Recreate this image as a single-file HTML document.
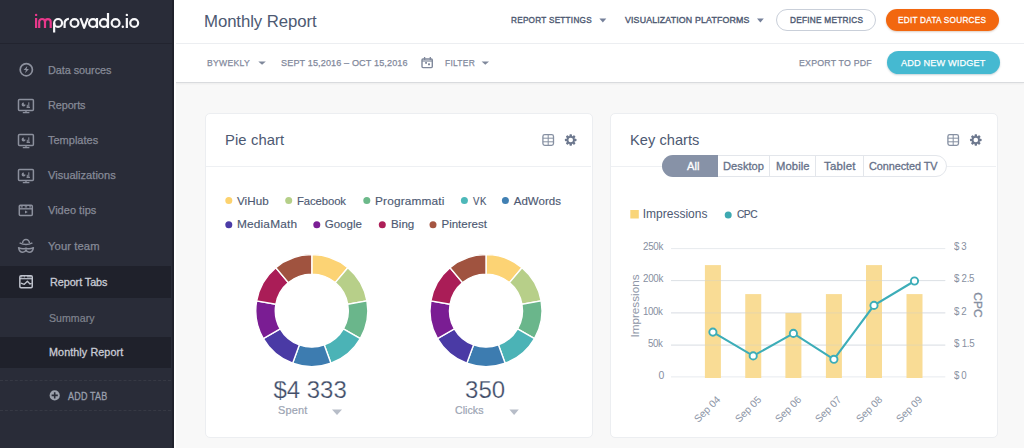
<!DOCTYPE html>
<html><head><meta charset="utf-8"><style>
html,body{margin:0;padding:0;}
body{width:1024px;height:448px;overflow:hidden;position:relative;background:#f8f8f8;font-family:"Liberation Sans",sans-serif;}
.a{position:absolute;}
.t{position:absolute;transform-origin:0 0;white-space:nowrap;line-height:20px;font-family:"Liberation Sans",sans-serif;}
svg{position:absolute;left:0;top:0;}

</style></head><body>
<div class="a" style="left:0;top:0;width:174px;height:448px;background:#292c38"></div>
<div class="a" style="left:172px;top:0;width:2px;height:448px;background:#20222c"></div>
<div class="a" style="left:0;top:43px;width:172px;height:1px;background:#22242f"></div>
<div class="a" style="left:0;top:266px;width:171px;height:32px;background:#1f212b"></div>
<div class="a" style="left:0;top:337px;width:171px;height:31px;background:#1f212b"></div>
<div class="a" style="left:0;top:380px;width:171px;height:0;border-top:1px dashed #363944"></div>
<div class="a" style="left:0;top:410px;width:171px;height:0;border-top:1px dashed #363944"></div>
<div class="a" style="left:174px;top:0;width:850px;height:82px;background:#fff;box-shadow:0 2px 2px rgba(0,0,0,0.05)"></div>
<div class="a" style="left:176px;top:43px;width:848px;height:1px;background:#eceef1"></div>
<div class="a" style="left:174px;top:82px;width:850px;height:1px;background:#d9dbde"></div>
<div class="a" style="left:174px;top:0;width:2px;height:448px;background:#fff"></div>
<div class="a" style="left:776px;top:9px;width:98px;height:20px;border:1.5px solid #c9cfd9;border-radius:12px;background:#fff"></div>
<div class="a" style="left:886px;top:9px;width:113px;height:22px;border-radius:11px;background:#f2670f;box-shadow:0 1px 2px rgba(120,60,20,0.25)"></div>
<div class="a" style="left:887px;top:51px;width:113px;height:23px;border-radius:11.5px;background:#45b9d1;box-shadow:0 1px 2px rgba(20,80,100,0.25)"></div>
<div class="a" style="left:205px;top:113px;width:386px;height:323px;background:#fff;border:1px solid #eceef1;border-radius:5px"></div>
<div class="a" style="left:610px;top:113px;width:386px;height:323px;background:#fff;border:1px solid #eceef1;border-radius:5px"></div>
<div class="a" style="left:206px;top:166px;width:385px;height:1px;background:#eef0f3"></div>
<div class="a" style="left:611px;top:166px;width:385px;height:1px;background:#eef0f3"></div>
<div class="a" style="left:662px;top:155px;width:283px;height:20px;border:1px solid #e3e6eb;border-radius:11px;background:#fff"></div>
<div class="a" style="left:662px;top:155px;width:56px;height:22px;border-radius:11px 0 0 11px;background:#8792a7"></div>
<div class="a" style="left:769px;top:156px;width:1px;height:20px;background:#e3e6eb"></div>
<div class="a" style="left:815px;top:156px;width:1px;height:20px;background:#e3e6eb"></div>
<div class="a" style="left:863px;top:156px;width:1px;height:20px;background:#e3e6eb"></div>
<svg width="1024" height="448" viewBox="0 0 1024 448"><circle cx="26.3" cy="69.7" r="6.1" fill="none" stroke="#8c909d" stroke-width="1.7"/><path d="M27.3 65.9 L23.6 70.1 L25.9 70.1 L25.1 73.3 L28.9 69.1 L26.6 69.1 Z" fill="#8c909d"/><g transform="translate(0,0)"><rect x="18.5" y="99.5" width="14.9" height="10.9" rx="1" fill="none" stroke="#8c909d" stroke-width="1.5"/><path d="M26 110.5 V112.5 M22.8 112.6 H29.4" stroke="#8c909d" stroke-width="1.3" fill="none"/><path d="M23.8 102.6 A2 2 0 1 0 25.6 104.6 L23.8 104.6 Z" fill="#8c909d"/><path d="M26.6 107.4 H30 M28.8 102.3 V107.4 M27.3 104.8 V107.4" stroke="#8c909d" stroke-width="1" fill="none"/></g><g transform="translate(0,35)"><rect x="18.5" y="99.5" width="14.9" height="10.9" rx="1" fill="none" stroke="#8c909d" stroke-width="1.5"/><path d="M26 110.5 V112.5 M22.8 112.6 H29.4" stroke="#8c909d" stroke-width="1.3" fill="none"/><path d="M23.8 102.6 A2 2 0 1 0 25.6 104.6 L23.8 104.6 Z" fill="#8c909d"/><path d="M26.6 107.4 H30 M28.8 102.3 V107.4 M27.3 104.8 V107.4" stroke="#8c909d" stroke-width="1" fill="none"/></g><g transform="translate(0,70)"><rect x="18.5" y="99.5" width="14.9" height="10.9" rx="1" fill="none" stroke="#8c909d" stroke-width="1.5"/><path d="M26 110.5 V112.5 M22.8 112.6 H29.4" stroke="#8c909d" stroke-width="1.3" fill="none"/><path d="M23.8 102.6 A2 2 0 1 0 25.6 104.6 L23.8 104.6 Z" fill="#8c909d"/><path d="M26.6 107.4 H30 M28.8 102.3 V107.4 M27.3 104.8 V107.4" stroke="#8c909d" stroke-width="1" fill="none"/></g><rect x="19.3" y="205.3" width="13" height="10.3" rx="1" fill="none" stroke="#8c909d" stroke-width="1.5"/><path d="M19.3 208.8 H32.3" stroke="#8c909d" stroke-width="1.4"/><path d="M20.6 206.9 H22.8 M24.7 206.9 H27.2 M29.2 206.9 H31" stroke="#8c909d" stroke-width="1.2"/><path d="M25 210.6 L27.8 212.1 L25 213.6 Z" fill="#8c909d"/><path d="M22.6 243 A3.4 3.6 0 0 1 29.4 243" fill="none" stroke="#8c909d" stroke-width="1.5"/><path d="M19.6 242.9 Q26 246.2 32.4 242.9" fill="none" stroke="#8c909d" stroke-width="1.5"/><path d="M18.6 247.7 Q19.2 252.3 22.8 252.3 Q25.4 252.1 26 250 Q26.6 252.1 29.2 252.3 Q32.8 252.3 33.4 247.7 Q29.8 249.6 26 248.2 Q22.2 249.6 18.6 247.7 Z" fill="none" stroke="#8c909d" stroke-width="1.5" stroke-linejoin="round"/><rect x="19.85" y="275.85" width="12.4" height="11.9" rx="1.2" fill="none" stroke="#c0c4ce" stroke-width="1.5"/><path d="M19.85 278.7 H32.25" stroke="#c0c4ce" stroke-width="1.2"/><path d="M21 276.9 H22.3 M23.7 276.9 H25 M27 276.9 H31.2" stroke="#c0c4ce" stroke-width="1"/><path d="M20.8 283.1 L24.3 284.3 L27.4 281.3 L30 284 L31.6 283.4" fill="none" stroke="#c0c4ce" stroke-width="1.3" stroke-linejoin="round"/><circle cx="54.7" cy="395.4" r="5.1" fill="#9ca1ad"/><path d="M54.7 392.3 V398.5 M51.6 395.4 H57.8" stroke="#292c38" stroke-width="1.6"/><g fill="none" stroke-width="2.2"><path d="M36.1 18 V28" stroke="#e8388b"/><circle cx="36.1" cy="14.9" r="1.2" fill="#e8388b" stroke="none"/><path d="M39.2 28.1 V21.9 A2.9 2.9 0 0 1 45 21.9 V28.1 M45 21.9 A2.85 2.85 0 0 1 50.7 21.9 V28.1" stroke="#e8388b"/><path d="M54.15 32.5 V23" stroke="#f7f7f9"/><circle cx="58.1" cy="22.95" r="3.95" stroke="#f7f7f9"/><path d="M64.6 28.1 V23.2 A4.2 4.2 0 0 1 68.9 18.9" stroke="#f7f7f9"/><circle cx="74.5" cy="23" r="3.95" stroke="#f7f7f9"/><path d="M80.5 18.1 L84.15 27.8 L87.8 18.1" stroke="#f7f7f9" stroke-linejoin="round"/><circle cx="93" cy="23" r="3.95" stroke="#f7f7f9"/><path d="M97 18 V28.1" stroke="#f7f7f9"/><circle cx="103.9" cy="23" r="3.95" stroke="#f7f7f9"/><path d="M108 13 V28.1" stroke="#f7f7f9"/><circle cx="115.6" cy="23" r="3.95" stroke="#f7f7f9"/><circle cx="122.8" cy="26.8" r="1.2" fill="#f7f7f9" stroke="none"/><path d="M126.85 18 V28" stroke="#f7f7f9"/><circle cx="126.85" cy="14.9" r="1.2" fill="#f7f7f9" stroke="none"/><circle cx="134.2" cy="23" r="3.95" stroke="#f7f7f9"/></g><path d="M599.4 18.5 L606.3 18.5 L602.8499999999999 22.5 Z" fill="#75809a"/><path d="M757 18.5 L763.8 18.5 L760.4 22.5 Z" fill="#75809a"/><path d="M258.3 61.5 L265.8 61.5 L262.05 64.8 Z" fill="#7f889b"/><path d="M481.6 61.5 L489 61.5 L485.3 64.8 Z" fill="#7f889b"/><path d="M332 409.5 L342 409.5 L337.0 415 Z" fill="#b7bdc8"/><path d="M509.4 409.5 L518.8 409.5 L514.0999999999999 415 Z" fill="#b7bdc8"/><rect x="422" y="59" width="10.3" height="8.6" rx="1" fill="none" stroke="#7f889b" stroke-width="1.4"/><path d="M424.6 57 V60 M430.3 57 V60" stroke="#7f889b" stroke-width="1.3"/><path d="M422 61 H432.3" stroke="#7f889b" stroke-width="1.2"/><rect x="425.1" y="61.9" width="1.9" height="1.9" rx="0.4" fill="#7f889b"/><rect x="428" y="63.3" width="2" height="2" rx="0.4" fill="#7f889b"/><rect x="542.9000000000001" y="134.7" width="10.6" height="10.6" rx="1.8" fill="none" stroke="#8690a2" stroke-width="1.3"/><path d="M548.2 134.7 V145.3 M542.9000000000001 138.2 H553.5 M542.9000000000001 141.8 H553.5" stroke="#8690a2" stroke-width="1"/><circle cx="570.7" cy="140.0" r="4.1" fill="#6d788e"/><rect x="569.45" y="134.20" width="2.5" height="3" rx="0.7" fill="#6d788e" transform="rotate(0 570.7 140.0)"/><rect x="569.45" y="134.20" width="2.5" height="3" rx="0.7" fill="#6d788e" transform="rotate(45 570.7 140.0)"/><rect x="569.45" y="134.20" width="2.5" height="3" rx="0.7" fill="#6d788e" transform="rotate(90 570.7 140.0)"/><rect x="569.45" y="134.20" width="2.5" height="3" rx="0.7" fill="#6d788e" transform="rotate(135 570.7 140.0)"/><rect x="569.45" y="134.20" width="2.5" height="3" rx="0.7" fill="#6d788e" transform="rotate(180 570.7 140.0)"/><rect x="569.45" y="134.20" width="2.5" height="3" rx="0.7" fill="#6d788e" transform="rotate(225 570.7 140.0)"/><rect x="569.45" y="134.20" width="2.5" height="3" rx="0.7" fill="#6d788e" transform="rotate(270 570.7 140.0)"/><rect x="569.45" y="134.20" width="2.5" height="3" rx="0.7" fill="#6d788e" transform="rotate(315 570.7 140.0)"/><circle cx="570.7" cy="140.0" r="2.3" fill="#fff"/><rect x="947.9000000000001" y="134.7" width="10.6" height="10.6" rx="1.8" fill="none" stroke="#8690a2" stroke-width="1.3"/><path d="M953.2 134.7 V145.3 M947.9000000000001 138.2 H958.5 M947.9000000000001 141.8 H958.5" stroke="#8690a2" stroke-width="1"/><circle cx="975.8" cy="140.0" r="4.1" fill="#6d788e"/><rect x="974.55" y="134.20" width="2.5" height="3" rx="0.7" fill="#6d788e" transform="rotate(0 975.8 140.0)"/><rect x="974.55" y="134.20" width="2.5" height="3" rx="0.7" fill="#6d788e" transform="rotate(45 975.8 140.0)"/><rect x="974.55" y="134.20" width="2.5" height="3" rx="0.7" fill="#6d788e" transform="rotate(90 975.8 140.0)"/><rect x="974.55" y="134.20" width="2.5" height="3" rx="0.7" fill="#6d788e" transform="rotate(135 975.8 140.0)"/><rect x="974.55" y="134.20" width="2.5" height="3" rx="0.7" fill="#6d788e" transform="rotate(180 975.8 140.0)"/><rect x="974.55" y="134.20" width="2.5" height="3" rx="0.7" fill="#6d788e" transform="rotate(225 975.8 140.0)"/><rect x="974.55" y="134.20" width="2.5" height="3" rx="0.7" fill="#6d788e" transform="rotate(270 975.8 140.0)"/><rect x="974.55" y="134.20" width="2.5" height="3" rx="0.7" fill="#6d788e" transform="rotate(315 975.8 140.0)"/><circle cx="975.8" cy="140.0" r="2.3" fill="#fff"/><circle cx="228.8" cy="200.6" r="3.5" fill="#fcd26e"/><circle cx="288.7" cy="200.6" r="3.5" fill="#b5cf88"/><circle cx="366.8" cy="200.6" r="3.5" fill="#6cb98a"/><circle cx="464.4" cy="200.6" r="3.5" fill="#4db8b9"/><circle cx="505.4" cy="200.6" r="3.5" fill="#4180b3"/><circle cx="228.8" cy="224.75" r="3.5" fill="#4b3ba6"/><circle cx="316.8" cy="224.75" r="3.5" fill="#7b1f95"/><circle cx="382.3" cy="224.75" r="3.5" fill="#ad1f58"/><circle cx="433" cy="224.75" r="3.5" fill="#a55541"/><path d="M311.80 254.60 A56 56 0 0 1 347.80 267.70 L335.26 282.64 A36.5 36.5 0 0 0 311.80 274.10 Z" fill="#fcd374" stroke="#fff" stroke-width="1.4"/><path d="M347.80 267.70 A56 56 0 0 1 366.95 300.88 L347.75 304.26 A36.5 36.5 0 0 0 335.26 282.64 Z" fill="#b7cf89" stroke="#fff" stroke-width="1.4"/><path d="M366.95 300.88 A56 56 0 0 1 360.30 338.60 L343.41 328.85 A36.5 36.5 0 0 0 347.75 304.26 Z" fill="#6ab68b" stroke="#fff" stroke-width="1.4"/><path d="M360.30 338.60 A56 56 0 0 1 330.95 363.22 L324.28 344.90 A36.5 36.5 0 0 0 343.41 328.85 Z" fill="#4bb3b6" stroke="#fff" stroke-width="1.4"/><path d="M330.95 363.22 A56 56 0 0 1 292.65 363.22 L299.32 344.90 A36.5 36.5 0 0 0 324.28 344.90 Z" fill="#3d7cb0" stroke="#fff" stroke-width="1.4"/><path d="M292.65 363.22 A56 56 0 0 1 263.30 338.60 L280.19 328.85 A36.5 36.5 0 0 0 299.32 344.90 Z" fill="#4a3aa5" stroke="#fff" stroke-width="1.4"/><path d="M263.30 338.60 A56 56 0 0 1 256.65 300.88 L275.85 304.26 A36.5 36.5 0 0 0 280.19 328.85 Z" fill="#7a1d93" stroke="#fff" stroke-width="1.4"/><path d="M256.65 300.88 A56 56 0 0 1 275.80 267.70 L288.34 282.64 A36.5 36.5 0 0 0 275.85 304.26 Z" fill="#aa1d57" stroke="#fff" stroke-width="1.4"/><path d="M275.80 267.70 A56 56 0 0 1 311.80 254.60 L311.80 274.10 A36.5 36.5 0 0 0 288.34 282.64 Z" fill="#a0533f" stroke="#fff" stroke-width="1.4"/><path d="M486.00 254.60 A56 56 0 0 1 522.00 267.70 L509.46 282.64 A36.5 36.5 0 0 0 486.00 274.10 Z" fill="#fcd374" stroke="#fff" stroke-width="1.4"/><path d="M522.00 267.70 A56 56 0 0 1 541.15 300.88 L521.95 304.26 A36.5 36.5 0 0 0 509.46 282.64 Z" fill="#b7cf89" stroke="#fff" stroke-width="1.4"/><path d="M541.15 300.88 A56 56 0 0 1 534.50 338.60 L517.61 328.85 A36.5 36.5 0 0 0 521.95 304.26 Z" fill="#6ab68b" stroke="#fff" stroke-width="1.4"/><path d="M534.50 338.60 A56 56 0 0 1 505.15 363.22 L498.48 344.90 A36.5 36.5 0 0 0 517.61 328.85 Z" fill="#4bb3b6" stroke="#fff" stroke-width="1.4"/><path d="M505.15 363.22 A56 56 0 0 1 466.85 363.22 L473.52 344.90 A36.5 36.5 0 0 0 498.48 344.90 Z" fill="#3d7cb0" stroke="#fff" stroke-width="1.4"/><path d="M466.85 363.22 A56 56 0 0 1 437.50 338.60 L454.39 328.85 A36.5 36.5 0 0 0 473.52 344.90 Z" fill="#4a3aa5" stroke="#fff" stroke-width="1.4"/><path d="M437.50 338.60 A56 56 0 0 1 430.85 300.88 L450.05 304.26 A36.5 36.5 0 0 0 454.39 328.85 Z" fill="#7a1d93" stroke="#fff" stroke-width="1.4"/><path d="M430.85 300.88 A56 56 0 0 1 450.00 267.70 L462.54 282.64 A36.5 36.5 0 0 0 450.05 304.26 Z" fill="#aa1d57" stroke="#fff" stroke-width="1.4"/><path d="M450.00 267.70 A56 56 0 0 1 486.00 254.60 L486.00 274.10 A36.5 36.5 0 0 0 462.54 282.64 Z" fill="#a0533f" stroke="#fff" stroke-width="1.4"/><rect x="630.3" y="210" width="8.5" height="8.5" fill="#f9d579"/><circle cx="728.2" cy="214.9" r="3.5" fill="#3ea9b1"/><path d="M671 248.6 H945.3" stroke="#e7eaee" stroke-width="1"/><path d="M671 280.6 H945.3" stroke="#e7eaee" stroke-width="1"/><path d="M671 312.9 H945.3" stroke="#e7eaee" stroke-width="1"/><path d="M671 345.1 H945.3" stroke="#e7eaee" stroke-width="1"/><path d="M671 376.9 H945.3" stroke="#e7eaee" stroke-width="1"/><rect x="704.9" y="265.1" width="16" height="112.9" fill="#f9dc95"/><rect x="745.25" y="294.1" width="16" height="83.9" fill="#f9dc95"/><rect x="785.4" y="312.9" width="16" height="65.1" fill="#f9dc95"/><rect x="825.9" y="294.1" width="16" height="83.9" fill="#f9dc95"/><rect x="866" y="265.1" width="16" height="112.9" fill="#f9dc95"/><rect x="906.5" y="294.1" width="16" height="83.9" fill="#f9dc95"/><path d="M671 280.6 H945.3" stroke="#c9ced6" stroke-opacity="0.35" stroke-width="1"/><path d="M671 312.9 H945.3" stroke="#c9ced6" stroke-opacity="0.35" stroke-width="1"/><path d="M671 345.1 H945.3" stroke="#c9ced6" stroke-opacity="0.35" stroke-width="1"/><path d="M712.9 332.1 L753.2 355.9 L793.4 333.4 L833.9 359.3 L874.0 305.4 L914.5 281.0" fill="none" stroke="#3cadb8" stroke-width="2.1"/><circle cx="712.9" cy="332.1" r="3.6" fill="#fff" stroke="#3cadb8" stroke-width="1.9"/><circle cx="753.2" cy="355.9" r="3.6" fill="#fff" stroke="#3cadb8" stroke-width="1.9"/><circle cx="793.4" cy="333.4" r="3.6" fill="#fff" stroke="#3cadb8" stroke-width="1.9"/><circle cx="833.9" cy="359.3" r="3.6" fill="#fff" stroke="#3cadb8" stroke-width="1.9"/><circle cx="874.0" cy="305.4" r="3.6" fill="#fff" stroke="#3cadb8" stroke-width="1.9"/><circle cx="914.5" cy="281.0" r="3.6" fill="#fff" stroke="#3cadb8" stroke-width="1.9"/></svg>
<span class="t" style="left:679.4px;top:392.5px;width:40px;text-align:right;font-size:10.2px;line-height:10px;color:#8d95a6;transform-origin:100% 50%;transform:rotate(-45deg)">Sep 04</span>
<span class="t" style="left:719.7px;top:392.5px;width:40px;text-align:right;font-size:10.2px;line-height:10px;color:#8d95a6;transform-origin:100% 50%;transform:rotate(-45deg)">Sep 05</span>
<span class="t" style="left:759.9px;top:392.5px;width:40px;text-align:right;font-size:10.2px;line-height:10px;color:#8d95a6;transform-origin:100% 50%;transform:rotate(-45deg)">Sep 06</span>
<span class="t" style="left:800.4px;top:392.5px;width:40px;text-align:right;font-size:10.2px;line-height:10px;color:#8d95a6;transform-origin:100% 50%;transform:rotate(-45deg)">Sep 07</span>
<span class="t" style="left:840.5px;top:392.5px;width:40px;text-align:right;font-size:10.2px;line-height:10px;color:#8d95a6;transform-origin:100% 50%;transform:rotate(-45deg)">Sep 08</span>
<span class="t" style="left:881.0px;top:392.5px;width:40px;text-align:right;font-size:10.2px;line-height:10px;color:#8d95a6;transform-origin:100% 50%;transform:rotate(-45deg)">Sep 09</span>
<span class="t" style="left:604.5px;top:299px;width:60px;text-align:center;font-size:11px;line-height:14px;color:#8d95a6;transform-origin:50% 50%;transform:rotate(-90deg) scaleX(1.066)">Impressions</span>
<span class="t" style="left:958px;top:297.8px;width:40px;text-align:center;font-size:11.5px;line-height:14px;color:#858ea0;-webkit-text-stroke:0.35px #858ea0;transform-origin:50% 50%;transform:rotate(90deg) scaleX(1.04)">CPC</span>
<span class="t" style="left:48.00px;top:60px;font-size:11px;color:#868a97;transform:scaleX(0.9879);letter-spacing:-0.048px;-webkit-text-stroke:0.25px #868a97;">Data sources</span><span class="t" style="left:48.00px;top:95px;font-size:11px;color:#868a97;transform:scaleX(0.9843);letter-spacing:-0.068px;-webkit-text-stroke:0.25px #868a97;">Reports</span><span class="t" style="left:48.00px;top:130px;font-size:11px;color:#868a97;-webkit-text-stroke:0.25px #868a97;">Templates</span><span class="t" style="left:48.00px;top:165px;font-size:11px;color:#868a97;transform:scaleX(1.0061);letter-spacing:0.021px;-webkit-text-stroke:0.25px #868a97;">Visualizations</span><span class="t" style="left:48.00px;top:200px;font-size:11px;color:#868a97;letter-spacing:0.017px;-webkit-text-stroke:0.25px #868a97;">Video tips</span><span class="t" style="left:48.00px;top:236px;font-size:11px;color:#868a97;transform:scaleX(1.0219);letter-spacing:0.090px;-webkit-text-stroke:0.25px #868a97;">Your team</span><span class="t" style="left:49.60px;top:272px;font-size:11px;color:#c9ccd5;transform:scaleX(0.9833);letter-spacing:-0.067px;-webkit-text-stroke:0.3px #c9ccd5;">Report Tabs</span><span class="t" style="left:48.75px;top:308px;font-size:10.5px;color:#80848f;transform:scaleX(1.0076);letter-spacing:0.038px;-webkit-text-stroke:0.2px #80848f;">Summary</span><span class="t" style="left:48.75px;top:342px;font-size:10.5px;color:#c9ccd5;transform:scaleX(1.0248);letter-spacing:0.090px;-webkit-text-stroke:0.3px #c9ccd5;">Monthly Report</span><span class="t" style="left:67.50px;top:387px;font-size:10px;color:#9a9fac;transform:scaleX(0.8979);letter-spacing:0.224px;-webkit-text-stroke:0.3px #9a9fac;">ADD TAB</span><span class="t" style="left:204.11px;top:12px;font-size:17px;color:#4d5972;transform:scaleX(0.9861);letter-spacing:-0.082px;">Monthly Report</span><span class="t" style="left:511.25px;top:10px;font-size:9.7px;color:#4d5972;transform:scaleX(0.8421);letter-spacing:0.330px;-webkit-text-stroke:0.4px #4d5972;">REPORT SETTINGS</span><span class="t" style="left:625.40px;top:10px;font-size:9.7px;color:#4d5972;transform:scaleX(0.9089);letter-spacing:0.168px;-webkit-text-stroke:0.4px #4d5972;">VISUALIZATION PLATFORMS</span><span class="t" style="left:790.00px;top:10px;font-size:9.7px;color:#4d5972;transform:scaleX(0.8513);letter-spacing:0.298px;-webkit-text-stroke:0.4px #4d5972;">DEFINE METRICS</span><span class="t" style="left:898.00px;top:10px;font-size:9.7px;color:#ffffff;transform:scaleX(0.8460);letter-spacing:0.307px;-webkit-text-stroke:0.3px #ffffff;">EDIT DATA SOURCES</span><span class="t" style="left:206.75px;top:53px;font-size:9.9px;color:#7f889b;transform:scaleX(0.8719);letter-spacing:0.316px;-webkit-text-stroke:0.25px #7f889b;">BYWEKLY</span><span class="t" style="left:281.40px;top:53px;font-size:9.9px;color:#7f889b;transform:scaleX(0.9216);letter-spacing:0.128px;-webkit-text-stroke:0.25px #7f889b;">SEPT 15,2016 – OCT 15,2016</span><span class="t" style="left:445.40px;top:53px;font-size:9.9px;color:#7f889b;transform:scaleX(0.8533);letter-spacing:0.308px;-webkit-text-stroke:0.25px #7f889b;">FILTER</span><span class="t" style="left:799.00px;top:53px;font-size:9.9px;color:#7f889b;transform:scaleX(0.8927);letter-spacing:0.217px;-webkit-text-stroke:0.25px #7f889b;">EXPORT TO PDF</span><span class="t" style="left:901.00px;top:53px;font-size:9.9px;color:#ffffff;transform:scaleX(0.9308);letter-spacing:0.142px;-webkit-text-stroke:0.25px #ffffff;">ADD NEW WIDGET</span><span class="t" style="left:225.23px;top:130px;font-size:14.5px;color:#4d5972;transform:scaleX(1.0208);letter-spacing:0.097px;">Pie chart</span><span class="t" style="left:237.00px;top:191px;font-size:11.5px;color:#4d5972;transform:scaleX(1.0104);letter-spacing:0.053px;-webkit-text-stroke:0.15px #4d5972;">ViHub</span><span class="t" style="left:297.25px;top:191px;font-size:11.5px;color:#4d5972;transform:scaleX(0.9821);letter-spacing:-0.087px;-webkit-text-stroke:0.15px #4d5972;">Facebook</span><span class="t" style="left:375.25px;top:191px;font-size:11.5px;color:#4d5972;transform:scaleX(1.0317);letter-spacing:0.137px;-webkit-text-stroke:0.15px #4d5972;">Programmati</span><span class="t" style="left:472.50px;top:191px;font-size:11.5px;color:#4d5972;transform:scaleX(0.8327);letter-spacing:0.841px;-webkit-text-stroke:0.15px #4d5972;">VK</span><span class="t" style="left:513.75px;top:191px;font-size:11.5px;color:#4d5972;letter-spacing:0.011px;-webkit-text-stroke:0.15px #4d5972;">AdWords</span><span class="t" style="left:237.00px;top:214px;font-size:11.5px;color:#4d5972;transform:scaleX(1.0327);letter-spacing:0.153px;-webkit-text-stroke:0.15px #4d5972;">MediaMath</span><span class="t" style="left:324.75px;top:214px;font-size:11.5px;color:#4d5972;-webkit-text-stroke:0.15px #4d5972;">Google</span><span class="t" style="left:390.50px;top:214px;font-size:11.5px;color:#4d5972;transform:scaleX(1.0074);letter-spacing:0.037px;-webkit-text-stroke:0.15px #4d5972;">Bing</span><span class="t" style="left:441.50px;top:214px;font-size:11.5px;color:#4d5972;-webkit-text-stroke:0.15px #4d5972;">Pinterest</span><span class="t" style="left:273.40px;top:380px;font-size:24px;color:#414d68;-webkit-text-stroke:0.25px #ffffff;">$4 333</span><span class="t" style="left:465.00px;top:380px;font-size:24px;color:#414d68;letter-spacing:0.061px;-webkit-text-stroke:0.25px #ffffff;">350</span><span class="t" style="left:277.50px;top:400px;font-size:10.5px;color:#9ca4b3;transform:scaleX(1.0425);letter-spacing:0.194px;-webkit-text-stroke:0.2px #9ca4b3;">Spent</span><span class="t" style="left:454.75px;top:400px;font-size:10.5px;color:#9ca4b3;transform:scaleX(1.0108);letter-spacing:0.040px;-webkit-text-stroke:0.2px #9ca4b3;">Clicks</span><span class="t" style="left:630.24px;top:130px;font-size:14.5px;color:#4d5972;transform:scaleX(1.0080);letter-spacing:0.040px;">Key charts</span><span class="t" style="left:686.90px;top:156px;font-size:11px;color:#ffffff;transform:scaleX(1.0162);letter-spacing:0.063px;-webkit-text-stroke:0.3px #ffffff;">All</span><span class="t" style="left:723.10px;top:156px;font-size:11px;color:#667189;transform:scaleX(1.0099);letter-spacing:0.044px;-webkit-text-stroke:0.3px #667189;">Desktop</span><span class="t" style="left:775.50px;top:156px;font-size:11px;color:#667189;transform:scaleX(1.0224);letter-spacing:0.096px;-webkit-text-stroke:0.3px #667189;">Mobile</span><span class="t" style="left:823.60px;top:156px;font-size:11px;color:#667189;transform:scaleX(1.0405);letter-spacing:0.157px;-webkit-text-stroke:0.3px #667189;">Tablet</span><span class="t" style="left:868.75px;top:156px;font-size:11px;color:#667189;transform:scaleX(0.9861);letter-spacing:-0.060px;-webkit-text-stroke:0.3px #667189;">Connected TV</span><span class="t" style="left:642.75px;top:204px;font-size:12px;color:#4d5972;">Impressions</span><span class="t" style="left:736.60px;top:204px;font-size:11.5px;color:#4d5972;transform:scaleX(0.8900);letter-spacing:-0.584px;-webkit-text-stroke:0.15px #4d5972;">CPC</span><span class="t" style="left:642.50px;top:236px;font-size:10.5px;color:#878fa1;transform:scaleX(0.9343);letter-spacing:-0.347px;">250k</span><span class="t" style="left:642.50px;top:268px;font-size:10.5px;color:#878fa1;transform:scaleX(0.9343);letter-spacing:-0.347px;">200k</span><span class="t" style="left:642.90px;top:301px;font-size:10.5px;color:#878fa1;transform:scaleX(0.9236);letter-spacing:-0.405px;">100k</span><span class="t" style="left:648.10px;top:333px;font-size:10.5px;color:#878fa1;transform:scaleX(0.9205);letter-spacing:-0.475px;">50k</span><span class="t" style="left:658.40px;top:365px;font-size:10.5px;color:#878fa1;">0</span><span class="t" style="left:954.10px;top:236px;font-size:10.5px;color:#878fa1;transform:scaleX(0.9182);letter-spacing:-0.408px;">$ 3</span><span class="t" style="left:954.10px;top:268px;font-size:10.5px;color:#878fa1;transform:scaleX(0.9250);letter-spacing:-0.298px;">$ 2.5</span><span class="t" style="left:954.10px;top:301px;font-size:10.5px;color:#878fa1;transform:scaleX(0.9225);letter-spacing:-0.386px;">$ 2</span><span class="t" style="left:954.10px;top:333px;font-size:10.5px;color:#878fa1;transform:scaleX(0.9317);letter-spacing:-0.271px;">$ 1.5</span><span class="t" style="left:954.10px;top:365px;font-size:10.5px;color:#878fa1;transform:scaleX(0.9225);letter-spacing:-0.386px;">$ 0</span>
</body></html>
